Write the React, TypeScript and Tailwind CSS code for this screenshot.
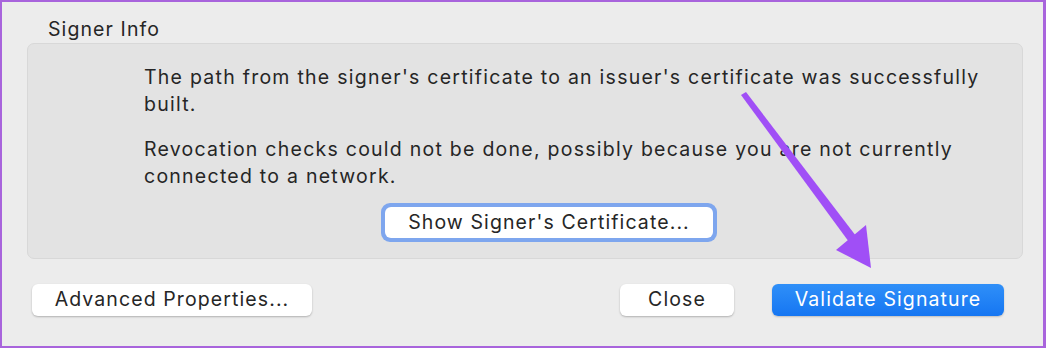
import React from "react";

const font = { fontFamily: "Inter, 'Noto Sans', 'Liberation Sans', sans-serif" };

export default function App() {
  return (
    <div
      className="relative w-[1046px] h-[348px] bg-[#ececec] border-t-2 border-l-2 border-b-2 border-r-[3px] border-[#a864dc] text-[#262626] overflow-hidden tracking-[1.1px]"
      style={font}
    >
      <div className="pl-[46px] pt-[15px] text-[19.5px] leading-[24px] text-[#262626]">Signer Info</div>
      <div className="ml-[25px] mt-[2px] w-[996px] h-[216px] rounded-[7px] bg-[#e3e3e3] border border-[#d8d8d8] flex flex-col">
        <div className="pl-[116px] pt-[20px] text-[19.5px] leading-[27px] tracking-[1.25px]">
          <p className="whitespace-nowrap">
            The path from the signer's certificate to an issuer's certificate was successfully
            <br />
            built.
          </p>
          <p className="whitespace-nowrap mt-[18px]">
            Revocation checks could not be done, possibly because you are not currently
            <br />
            connected to a network.
          </p>
        </div>
        <div className="flex justify-center mt-[13px] pl-[48px]">
          <div className="rounded-[9px] bg-[#7ea6ee] p-[4px]">
            <div className="w-[328px] h-[31px] rounded-[6px] bg-white flex items-center justify-center text-[19.5px]">
              Show Signer's Certificate...
            </div>
          </div>
        </div>
      </div>
      <div className="flex items-center mt-[25px] pl-[30px]">
        <div className="w-[280px] h-[32px] rounded-[6px] bg-white shadow-[0_1px_2px_rgba(0,0,0,0.25)] flex items-center justify-center text-[19.5px]">
          Advanced Properties...
        </div>
        <div className="ml-[308px] w-[114px] h-[32px] rounded-[6px] bg-white shadow-[0_1px_2px_rgba(0,0,0,0.25)] flex items-center justify-center text-[19.5px]">
          Close
        </div>
        <div className="ml-[38px] w-[232px] h-[32px] rounded-[6px] bg-gradient-to-b from-[#2f8ff8] to-[#1576f2] shadow-[0_1px_2px_rgba(0,0,0,0.2)] flex items-center justify-center text-[19.5px] text-white">
          Validate Signature
        </div>
      </div>
      <svg className="absolute left-[-2px] top-[-2px] pointer-events-none" width="1046" height="348">
        <polygon points="741,95 746,92 856,236 849,242" fill="#a04ff6" />
        <polygon points="871,268 836,250 866,225" fill="#a04ff6" />
      </svg>
    </div>
  );
}
